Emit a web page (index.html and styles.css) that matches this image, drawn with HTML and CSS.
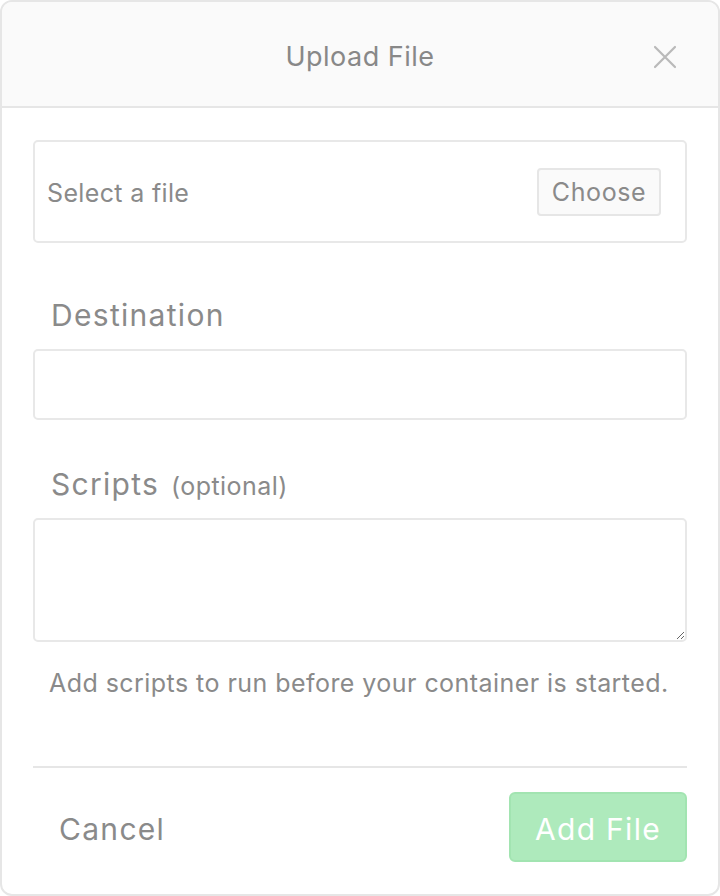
FILE: index.html
```html
<!DOCTYPE html>
<html>
<head>
<meta charset="utf-8">
<link rel="stylesheet" href="styles.css">
</head>
<body>
<div class="modal">
  <div class="modal-header">
    <div class="title">Upload File</div>
    <button class="close" aria-label="Close">
      <svg width="24" height="24" viewBox="0 0 24 24"><path d="M2 2 L22 22 M22 2 L2 22" stroke="#b9b9b9" stroke-width="2.2" stroke-linecap="round" fill="none"/></svg>
    </button>
  </div>
  <div class="modal-body">
    <div class="file-box">
      <span class="file-placeholder">Select a file</span>
      <button class="choose">Choose</button>
    </div>
    <label class="label label-dest">Destination</label>
    <input class="input input-dest" type="text">
    <label class="label label-scripts">Scripts <span class="optional">(optional)</span></label>
    <textarea class="textarea"></textarea>
    <p class="help">Add scripts to run before your container is started.</p>
  </div>
  <div class="modal-footer">
    <button class="cancel">Cancel</button>
    <button class="add">Add File</button>
  </div>
</div>
</body>
</html>
```

FILE: styles.css
```css
* { box-sizing: border-box; }
html, body { margin: 0; padding: 0; background: #ffffff; }
body { font-family: Inter, "Helvetica Neue", Arial, sans-serif; color: #8a8a8a; }

.modal {
  width: 720px;
  height: 896px;
  border: 2px solid #e6e6e6;
  border-radius: 12px;
  overflow: hidden;
  display: flex;
  flex-direction: column;
  background: #ffffff;
}

.modal-header {
  height: 106px;
  flex: none;
  background: #fafafa;
  border-bottom: 2px solid #e6e6e6;
  display: flex;
  align-items: center;
  justify-content: center;
  position: relative;
}
.title {
  font-size: 27px;
  letter-spacing: 0.5px;
  color: #888888;
  margin-top: 6px;
  line-height: 34px;
}
.close {
  position: absolute;
  right: 41px;
  top: 43px;
  width: 24px;
  height: 24px;
  padding: 0;
  border: none;
  background: none;
}
.close svg { display: block; }

.modal-body {
  padding: 32px 31px 0 31px;
  display: flex;
  flex-direction: column;
}

.file-box {
  height: 103px;
  border: 2px solid #e8e8e8;
  border-radius: 5px;
  display: flex;
  align-items: center;
  justify-content: space-between;
  padding: 0 24px 0 12px;
}
.file-placeholder {
  font-size: 25px;
  letter-spacing: 0.35px;
  color: #8a8a8a;
  line-height: 30px;
  padding-top: 2px;
}
.choose {
  height: 48px;
  width: 124px;
  background: #fafafa;
  border: 2px solid #e6e6e6;
  border-radius: 4px;
  font-family: inherit;
  font-size: 25px;
  letter-spacing: 0.6px;
  color: #8a8a8a;
  padding: 0;
}

.label {
  display: block;
  font-size: 30px;
  letter-spacing: 1.3px;
  color: #8a8a8a;
  padding-left: 18px;
  line-height: 34px;
}
.label-dest { margin-top: 54px; padding-top: 1px; }
.label-scripts { margin-top: 45px; padding-top: 2px; }
.optional { font-size: 25px; letter-spacing: 0.45px; margin-left: 2px; }

.input {
  height: 71px;
  border: 2px solid #e8e8e8;
  border-radius: 5px;
  width: 100%;
  outline: none;
}
.input-dest { margin-top: 17px; }
.textarea {
  margin-top: 15px;
  height: 124px;
  border: 2px solid #e8e8e8;
  border-radius: 5px;
  width: 100%;
  outline: none;
  resize: vertical;
  font-family: inherit;
}
.help {
  margin: 27px 0 0 0;
  padding-left: 16px;
  font-size: 25px;
  letter-spacing: 0.45px;
  line-height: 28px;
  color: #8a8a8a;
}

.modal-footer {
  margin: 69px 31px 0 31px;
  border-top: 2px solid #e6e6e6;
  display: flex;
  justify-content: space-between;
  align-items: center;
  padding-top: 24px;
}
.cancel {
  background: none;
  border: none;
  font-family: inherit;
  font-size: 30px;
  letter-spacing: 1.3px;
  color: #8a8a8a;
  padding: 4px 0 0 26px;
}
.add {
  width: 178px;
  height: 70px;
  background: #aeeabc;
  border: 2px solid #a2e4b1;
  border-radius: 6px;
  color: #ffffff;
  font-family: inherit;
  font-size: 30px;
  letter-spacing: 1.3px;
  padding: 4px 0 0 0;
}
```
